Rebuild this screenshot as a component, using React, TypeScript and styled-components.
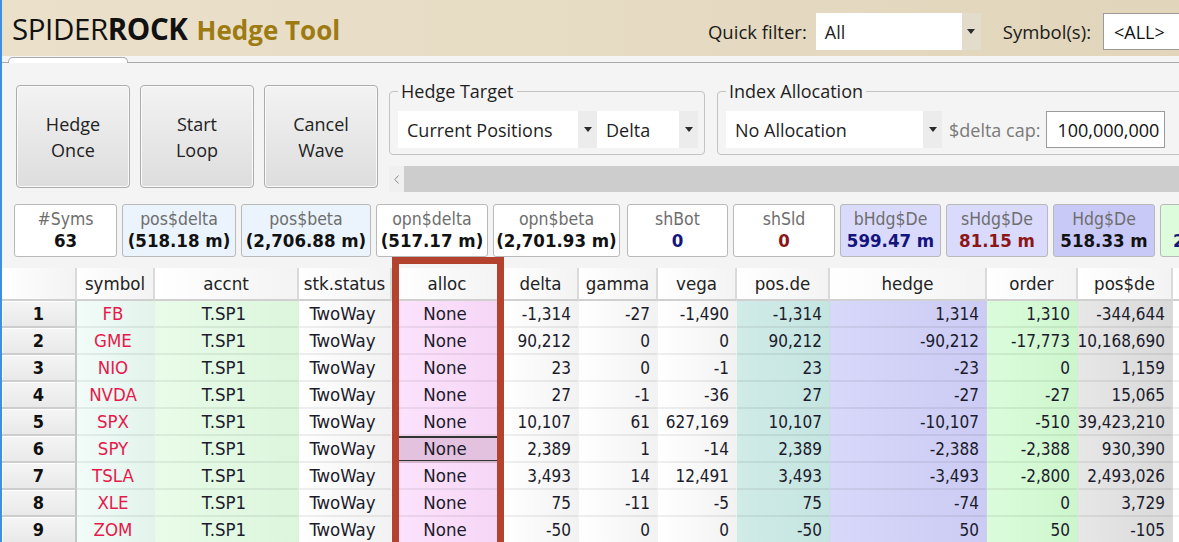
import React from 'react';
import styled, { createGlobalStyle } from 'styled-components';

const uiFont = `'Open Sans', 'Noto Sans', sans-serif`;
const gridFont = `'DejaVu Sans Condensed', 'DejaVu Sans', sans-serif`;

const GlobalStyle = createGlobalStyle`
  html, body {
    margin: 0;
    padding: 0;
    background: #f4f4f4;
    overflow: hidden;
  }
  * {
    box-sizing: border-box;
  }
`;

type Tone =
  | 'plain'
  | 'symbol'
  | 'accnt'
  | 'alloc'
  | 'posde'
  | 'hedge'
  | 'order'
  | 'posdollar'
  | 'blank';

const tones: Record<Tone, string> = {
  plain: 'linear-gradient(to right, #ffffff, #f2f2f2)',
  symbol: 'linear-gradient(to right, #f2fcf9, #e2f4ec)',
  accnt: 'linear-gradient(to right, #e9fce9, #dcf5dc)',
  alloc: 'linear-gradient(to right, #fde3fd, #f5d6f5)',
  posde: 'linear-gradient(to right, #d0ebe8, #c5e5e1)',
  hedge: 'linear-gradient(to right, #d8d8fa, #cbcbf4)',
  order: 'linear-gradient(to right, #dbfcdb, #cdf6cd)',
  posdollar: 'linear-gradient(to right, #e7e7e7, #d9d9d9)',
  blank: '#ffffff',
};

type Kind = 'text' | 'number';

type Column = {
  title: string;
  width: number;
  tone: Tone;
  kind: Kind;
};

const columns: Column[] = [
  { title: 'symbol', width: 78, tone: 'symbol', kind: 'text' },
  { title: 'accnt', width: 144, tone: 'accnt', kind: 'text' },
  { title: 'stk.status', width: 93, tone: 'plain', kind: 'text' },
  { title: 'alloc', width: 112, tone: 'alloc', kind: 'text' },
  { title: 'delta', width: 75, tone: 'plain', kind: 'number' },
  { title: 'gamma', width: 79, tone: 'plain', kind: 'number' },
  { title: 'vega', width: 79, tone: 'plain', kind: 'number' },
  { title: 'pos.de', width: 93, tone: 'posde', kind: 'number' },
  { title: 'hedge', width: 157, tone: 'hedge', kind: 'number' },
  { title: 'order', width: 91, tone: 'order', kind: 'number' },
  { title: 'pos$de', width: 95, tone: 'posdollar', kind: 'number' },
  { title: '', width: 40, tone: 'blank', kind: 'number' },
];

const rows: string[][] = [
  ['FB', 'T.SP1', 'TwoWay', 'None', '-1,314', '-27', '-1,490', '-1,314', '1,314', '1,310', '-344,644', ''],
  ['GME', 'T.SP1', 'TwoWay', 'None', '90,212', '0', '0', '90,212', '-90,212', '-17,773', '10,168,690', ''],
  ['NIO', 'T.SP1', 'TwoWay', 'None', '23', '0', '-1', '23', '-23', '0', '1,159', ''],
  ['NVDA', 'T.SP1', 'TwoWay', 'None', '27', '-1', '-36', '27', '-27', '-27', '15,065', ''],
  ['SPX', 'T.SP1', 'TwoWay', 'None', '10,107', '61', '627,169', '10,107', '-10,107', '-510', '139,423,210', ''],
  ['SPY', 'T.SP1', 'TwoWay', 'None', '2,389', '1', '-14', '2,389', '-2,388', '-2,388', '930,390', ''],
  ['TSLA', 'T.SP1', 'TwoWay', 'None', '3,493', '14', '12,491', '3,493', '-3,493', '-2,800', '2,493,026', ''],
  ['XLE', 'T.SP1', 'TwoWay', 'None', '75', '-11', '-5', '75', '-74', '0', '3,729', ''],
  ['ZOM', 'T.SP1', 'TwoWay', 'None', '-50', '0', '0', '-50', '50', '50', '-105', ''],
];

const selectedRow = 5;

type Stat = {
  label: string;
  value: string;
  width: number;
  bg: string;
  color?: string;
  offset?: number;
};

const navy = '#14147e';
const maroon = '#8c1616';

const stats: Stat[] = [
  { label: '#Syms', value: '63', width: 103, bg: '#ffffff' },
  { label: 'pos$delta', value: '(518.18 m)', width: 114, bg: '#ebf4fc' },
  { label: 'pos$beta', value: '(2,706.88 m)', width: 130, bg: '#ebf4fc' },
  { label: 'opn$delta', value: '(517.17 m)', width: 112, bg: '#ffffff' },
  { label: 'opn$beta', value: '(2,701.93 m)', width: 127, bg: '#ffffff' },
  { label: 'shBot', value: '0', width: 101, bg: '#ffffff', color: navy, offset: 2 },
  { label: 'shSld', value: '0', width: 102, bg: '#ffffff', color: maroon },
  { label: 'bHdg$De', value: '599.47 m', width: 101, bg: '#dadafc', color: navy },
  { label: 'sHdg$De', value: '81.15 m', width: 102, bg: '#dadafc', color: maroon },
  { label: 'Hdg$De', value: '518.33 m', width: 102, bg: '#c9c9f8' },
  { label: 'Rsk$De', value: '25.04 m', width: 102, bg: '#dcfcdc', color: navy },
];

const Page = styled.div`
  position: relative;
  width: 1179px;
  height: 542px;
  overflow: hidden;
  border-left: 2px solid #3d8fe0;
  background: #f4f4f4;
  font-family: ${uiFont};
  color: #1e1e1e;
`;

const Header = styled.header`
  display: flex;
  align-items: center;
  height: 56px;
  padding-left: 10px;
  background: linear-gradient(to right, #ebe1cb, #e1d5bb);
`;

const Title = styled.h1`
  margin: 0;
  font-size: 29.5px;
  font-weight: 400;
  color: #111111;
  letter-spacing: -0.4px;
  white-space: nowrap;
`;

const Brand = styled.span<{ $bold?: boolean }>`
  font-weight: ${(p) => (p.$bold ? 700 : 400)};
`;

const ToolName = styled.span`
  margin-left: 9px;
  font-size: 26px;
  font-weight: 700;
  letter-spacing: 0;
  color: #9d7b12;
`;

const Filters = styled.div`
  display: flex;
  align-items: center;
  margin-left: auto;
  margin-top: 7px;
  margin-right: -6px;
`;

const FilterLabel = styled.span<{ $gap?: number; $after?: number }>`
  margin-left: ${(p) => p.$gap ?? 0}px;
  margin-right: ${(p) => p.$after ?? 9}px;
  font-size: 18.5px;
  color: #1a1a1a;
  white-space: nowrap;
`;

const ComboBox = styled.div<{ $width: number }>`
  display: flex;
  flex-shrink: 0;
  width: ${(p) => p.$width}px;
  height: 37px;
  background: #ffffff;
`;

const ComboValue = styled.span`
  flex: 1;
  display: flex;
  align-items: center;
  padding-left: 9px;
  font-size: 18px;
  white-space: nowrap;
  overflow: hidden;
`;

const ComboArrow = styled.span<{ $bg: string }>`
  display: flex;
  align-items: center;
  justify-content: center;
  width: 19px;
  background: ${(p) => p.$bg};
`;

const TextBox = styled.div<{ $width: number }>`
  display: flex;
  align-items: center;
  flex-shrink: 0;
  width: ${(p) => p.$width}px;
  height: 37px;
  padding-left: 10px;
  border: 1px solid #9a9a9a;
  background: #ffffff;
  font-size: 18px;
  color: #111111;
  white-space: nowrap;
`;

const TabStrip = styled.div`
  display: flex;
  align-items: flex-end;
  height: 7px;
  padding-left: 6px;
  background: #f4f4f4;
  border-bottom: 1px solid #a9a9a9;
`;

const Tab = styled.div`
  width: 120px;
  height: 6px;
  margin-bottom: -1px;
  background: #ffffff;
  border: 1px solid #a9a9a9;
  border-bottom: none;
  border-radius: 5px 5px 0 0;
`;

const Controls = styled.section`
  display: flex;
  align-items: flex-start;
  gap: 10px;
  padding: 16px 0 0 14px;
`;

const BigButton = styled.button`
  flex-shrink: 0;
  width: 114px;
  height: 103px;
  margin-top: 6px;
  padding: 0;
  border: 1px solid #acacac;
  border-radius: 4px;
  background: linear-gradient(#f3f3f3, #dddddd);
  box-shadow: inset 0 0 0 1px #fafafa;
  font-family: ${uiFont};
  font-size: 18px;
  line-height: 26px;
  color: #222222;
`;

const Options = styled.div`
  flex: 1;
  min-width: 0;
  margin-left: 1px;
  display: flex;
  flex-direction: column;
  gap: 11px;
  overflow: hidden;
`;

const Groups = styled.div`
  display: flex;
  gap: 12px;
`;

const Group = styled.fieldset<{ $width: number }>`
  display: flex;
  align-items: center;
  flex-shrink: 0;
  width: ${(p) => p.$width}px;
  min-inline-size: 0;
  margin: 0;
  padding: 8px 6px 6px 8px;
  border: 1px solid #c3c3c3;
  border-radius: 4px;
`;

const Legend = styled.legend`
  padding: 0 3px;
  font-size: 18px;
  line-height: 24px;
  color: #1e1e1e;
`;

const CapLabel = styled.span`
  margin: 0 6px 0 7px;
  font-size: 18px;
  color: #7a7a7a;
  white-space: nowrap;
`;

const ScrollBar = styled.div`
  display: flex;
  height: 26px;
  background: #cdcdcd;
`;

const ScrollArrow = styled.div`
  display: flex;
  align-items: center;
  justify-content: center;
  width: 15px;
  background: #f0f0f0;
`;

const Stats = styled.div`
  display: flex;
  gap: 5px;
  margin-top: 12px;
  padding-left: 12px;
`;

const StatBox = styled.div<{ $width: number; $bg: string; $offset?: number }>`
  display: flex;
  flex-direction: column;
  align-items: center;
  justify-content: center;
  flex-shrink: 0;
  width: ${(p) => p.$width}px;
  height: 53px;
  margin-left: ${(p) => p.$offset ?? 0}px;
  border: 1px solid #b9b9b9;
  border-radius: 3px;
  background: ${(p) => p.$bg};
  font-family: ${gridFont};
  white-space: nowrap;
`;

const StatLabel = styled.span`
  font-size: 17.5px;
  line-height: 21px;
  color: #6e6e6e;
`;

const StatValue = styled.span<{ $color?: string }>`
  font-size: 18.5px;
  font-weight: 700;
  line-height: 22px;
  color: ${(p) => p.$color ?? '#111111'};
`;

const Table = styled.table`
  margin-top: 11px;
  width: 1211px;
  table-layout: fixed;
  border-collapse: separate;
  border-spacing: 0;
  font-family: ${gridFont};
  font-size: 17px;
  color: #1b1b2b;
`;

const HeadCell = styled.th`
  height: 33px;
  padding: 0;
  border-right: 2px solid #dadada;
  border-bottom: 2px solid #d0d0d0;
  background: linear-gradient(to right, #ffffff, #f3f3f3);
  font-size: 18.5px;
  font-weight: 400;
  text-align: center;
  color: #222222;
  white-space: nowrap;
  overflow: hidden;
`;

const RowHead = styled.th`
  height: 27px;
  padding: 0;
  border-right: 2px solid #c6c6c6;
  border-bottom: 2px solid #cdcdcd;
  background: linear-gradient(#f5f5f5, #e9e9e9);
  box-shadow: inset 1px 1px 0 #ffffff;
  font-size: 18px;
  font-weight: 700;
  text-align: center;
  color: #111111;
`;

const Cell = styled.td<{ $tone: Tone; $selected?: boolean }>`
  height: 27px;
  padding: 0;
  border-right: 1px solid rgba(0, 0, 0, 0.05);
  border-bottom: 2px solid rgba(0, 0, 0, 0.06);
  background: ${(p) => (p.$selected ? '#e2c2de' : tones[p.$tone])};
  box-shadow: ${(p) => (p.$selected ? 'inset 0 2px 0 #333, inset 0 -1px 0 #333' : 'none')};
`;

const CellText = styled.div<{ $kind: Kind; $symbol?: boolean }>`
  display: flex;
  justify-content: ${(p) => (p.$kind === 'number' ? 'flex-end' : 'center')};
  padding: 0 7px 0 2px;
  overflow: hidden;
  white-space: nowrap;
  font-size: ${(p) => (p.$kind === 'number' ? 17 : 18.5)}px;
  color: ${(p) => (p.$symbol ? '#e61a4b' : 'inherit')};
`;

const Highlight = styled.div`
  position: absolute;
  left: 390px;
  top: 257px;
  width: 112px;
  height: 300px;
  border: 7px solid #b3432f;
  pointer-events: none;
`;

const DropArrow = () => (
  <svg width="8" height="5" viewBox="0 0 8 5">
    <path d="M0 0H8L4 5Z" fill="#2b2b2b" />
  </svg>
);

const Combo = ({ value, width, arrowBg = '#ececec' }: { value: string; width: number; arrowBg?: string }) => (
  <ComboBox $width={width}>
    <ComboValue>{value}</ComboValue>
    <ComboArrow $bg={arrowBg}>
      <DropArrow />
    </ComboArrow>
  </ComboBox>
);

const App = () => {
  return (
    <>
      <GlobalStyle />
      <Page>
        <Header>
          <Title>
            <Brand>SPIDER</Brand>
            <Brand $bold>ROCK</Brand>
            <ToolName>Hedge Tool</ToolName>
          </Title>
          <Filters>
            <FilterLabel>Quick filter:</FilterLabel>
            <Combo value="All" width={165} arrowBg="#e4dccb" />
            <FilterLabel $gap={22} $after={12}>Symbol(s):</FilterLabel>
            <TextBox $width={82}>&lt;ALL&gt;</TextBox>
          </Filters>
        </Header>
        <TabStrip>
          <Tab />
        </TabStrip>

        <Controls>
          <BigButton>Hedge<br />Once</BigButton>
          <BigButton>Start<br />Loop</BigButton>
          <BigButton>Cancel<br />Wave</BigButton>
          <Options>
            <Groups>
              <Group $width={316}>
                <Legend>Hedge Target</Legend>
                <Combo value="Current Positions" width={199} />
                <Combo value="Delta" width={101} />
              </Group>
              <Group $width={520}>
                <Legend>Index Allocation</Legend>
                <Combo value="No Allocation" width={216} />
                <CapLabel>$delta cap:</CapLabel>
                <TextBox $width={119}>100,000,000</TextBox>
              </Group>
            </Groups>
            <ScrollBar>
              <ScrollArrow>
                <svg width="5" height="9" viewBox="0 0 5 9">
                  <path d="M4.5 0.5L0.8 4.5L4.5 8.5" fill="none" stroke="#8a8a8a" strokeWidth="1" />
                </svg>
              </ScrollArrow>
            </ScrollBar>
          </Options>
        </Controls>

        <Stats>
          {stats.map((s) => (
            <StatBox key={s.label} $width={s.width} $bg={s.bg} $offset={s.offset}>
              <StatLabel>{s.label}</StatLabel>
              <StatValue $color={s.color}>{s.value}</StatValue>
            </StatBox>
          ))}
        </Stats>

        <Table>
          <colgroup>
            <col style={{ width: 75 }} />
            {columns.map((c, i) => (
              <col key={i} style={{ width: c.width }} />
            ))}
          </colgroup>
          <thead>
            <tr>
              <HeadCell />
              {columns.map((c, i) => (
                <HeadCell key={i}>{c.title}</HeadCell>
              ))}
            </tr>
          </thead>
          <tbody>
            {rows.map((row, r) => (
              <tr key={r}>
                <RowHead>{r + 1}</RowHead>
                {row.map((value, i) => (
                  <Cell
                    key={i}
                    $tone={columns[i].tone}
                    $selected={r === selectedRow && columns[i].tone === 'alloc'}
                  >
                    <CellText $kind={columns[i].kind} $symbol={i === 0}>
                      {value}
                    </CellText>
                  </Cell>
                ))}
              </tr>
            ))}
          </tbody>
        </Table>

        <Highlight />
      </Page>
    </>
  );
};

export default App;
